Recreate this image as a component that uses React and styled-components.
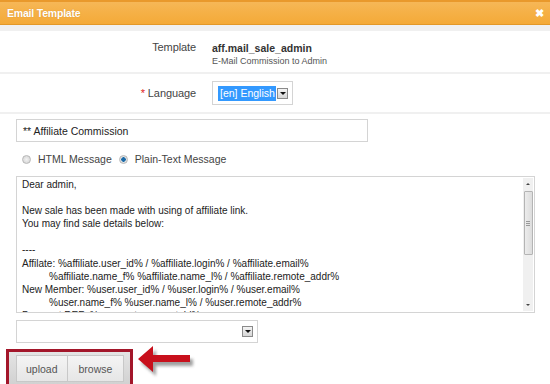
import styled, { createGlobalStyle } from 'styled-components';

const GlobalStyle = createGlobalStyle`
  html, body {
    margin: 0;
    padding: 0;
    background: #fff;
  }
  body {
    font-family: "Liberation Sans", Arial, sans-serif;
    font-size: 10px;
    color: #333;
  }
`;

const Dialog = styled.div`
  width: 550px;
  height: 384px;
  overflow: hidden;
  background: #fff;
`;

const Header = styled.div`
  height: 22px;
  display: flex;
  align-items: center;
  justify-content: space-between;
  padding: 0 6px 0 7px;
  background: linear-gradient(to bottom, #f6b757 0%, #f5b046 50%, #f4aa38 100%);
  border-top: 2px solid #e9992c;
  border-bottom: 1px solid #e39828;
`;

const Title = styled.h1`
  margin: 0;
  font-size: 10.5px;
  font-weight: bold;
  color: #fff;
  letter-spacing: -0.2px;
  text-shadow: 0 0 1px rgba(180, 110, 20, 0.5);
`;

const Close = styled.span`
  color: #fff;
  font-size: 11px;
  font-weight: bold;
  line-height: 1;
`;

const Strip = styled.div`
  height: 6px;
  background: #f0f0f0;
`;

const Row = styled.div`
  display: grid;
  grid-template-columns: 196px 1fr;
  column-gap: 16px;
  align-items: ${(p) => (p.$top ? 'start' : 'center')};
  height: ${(p) => p.$h}px;
  padding-top: ${(p) => p.$pt || 0}px;
  box-sizing: border-box;
  border-bottom: 2px solid #f0f0f0;
`;

const Label = styled.div`
  text-align: right;
  font-size: 11px;
  color: #444;
  letter-spacing: -0.1px;
`;

const Req = styled.span`
  color: #e01818;
  margin-right: 3px;
`;

const Value = styled.div`
  display: flex;
  flex-direction: column;
  gap: 2px;
  padding-top: 1px;
`;

const Strong = styled.span`
  font-weight: bold;
  font-size: 10.5px;
  color: #333;
`;

const Small = styled.span`
  font-size: 9px;
  color: #555;
`;

const SelectBox = styled.div`
  display: flex;
  align-items: center;
  gap: 1px;
  width: ${(p) => p.$w}px;
  height: ${(p) => p.$h}px;
  box-sizing: border-box;
  padding: 0 4px 0 5px;
  border: 1px solid #d4d4d4;
  background: #fff;
  justify-content: ${(p) => (p.$end ? 'flex-end' : 'flex-start')};
`;

const Picked = styled.span`
  background: #3399ff;
  color: #fff;
  font-size: 10.5px;
  padding: 0 2px;
  height: 15px;
  line-height: 15px;
  box-sizing: border-box;
  width: 59px;
  white-space: nowrap;
  overflow: hidden;
`;

const ArrowBtn = styled.span`
  width: 11px;
  height: 11px;
  flex: none;
  box-sizing: border-box;
  border: 1px solid #8a8a8a;
  background: linear-gradient(to bottom, #f4f4f4, #d6d6d6);
  display: flex;
  align-items: center;
  justify-content: center;
  &::after {
    content: '';
    border-left: 3px solid transparent;
    border-right: 3px solid transparent;
    border-top: 3px solid #111;
  }
`;

const Body = styled.div`
  padding: 5px 15px 0 16px;
  display: flex;
  flex-direction: column;
`;

const TextInput = styled.div`
  width: 352px;
  height: 23px;
  box-sizing: border-box;
  border: 1px solid #d4d4d4;
  padding: 0 6px;
  display: flex;
  align-items: center;
  font-size: 10.5px;
  color: #222;
`;

const Radios = styled.div`
  display: flex;
  align-items: center;
  height: 16px;
  margin: 9px 0 9px 0;
  padding-left: 2px;
  font-size: 10.5px;
  color: #444;
`;

const Radio = styled.span`
  width: 9px;
  height: 9px;
  border-radius: 50%;
  box-sizing: border-box;
  border: 1px solid #b8b8b8;
  background: radial-gradient(circle at 50% 50%, ${(p) => (p.$on ? '#1b6aa8 0, #1b6aa8 2px, #e6e6e6 2.5px' : '#f2f2f2 0')}, #d0d0d0 100%);
  margin: 0 7px 0 ${(p) => p.$ml || 0}px;
`;

const Area = styled.div`
  position: relative;
  width: 519px;
  height: 137px;
  box-sizing: border-box;
  border: 1px solid #d4d4d4;
  overflow: hidden;
  padding: 1px 16px 0 5px;
`;

const Line = styled.div`
  height: 13.1px;
  line-height: 13.1px;
  white-space: pre;
  font-size: 10px;
  color: #222;
  padding-left: ${(p) => (p.$indent ? 27 : 0)}px;
`;

const Scroll = styled.div`
  position: absolute;
  top: 1px;
  right: 1px;
  bottom: 1px;
  width: 10px;
  background: #f0f0f0;
  display: flex;
  flex-direction: column;
  align-items: center;
`;

const ScrollArrow = styled.span`
  height: 12px;
  display: flex;
  align-items: center;
  &::after {
    content: '';
    border-left: 2px solid transparent;
    border-right: 2px solid transparent;
    ${(p) => (p.$up ? 'border-bottom' : 'border-top')}: 2px solid #444;
  }
`;

const Thumb = styled.div`
  width: 9px;
  height: 64px;
  margin-top: 1px;
  box-sizing: border-box;
  border: 1px solid #b4b4b4;
  border-radius: 1px;
  background: linear-gradient(to right, #ececec, #dcdcdc);
  display: flex;
  align-items: center;
  justify-content: center;
  &::after {
    content: '';
    width: 4px;
    height: 5px;
    background: repeating-linear-gradient(to bottom, #999 0, #999 1px, transparent 1px, transparent 2px);
  }
`;

const Fill = styled.div`
  flex: 1;
`;

const Bottom = styled.div`
  margin-top: 7px;
`;

const ToolRow = styled.div`
  display: flex;
  align-items: flex-start;
  margin: 6px 0 0 -10px;
`;

const Frame = styled.div`
  display: flex;
  border: 3px solid #a3162a;
  padding: 3px 6px 6px 7px;
  background: linear-gradient(to bottom, #e4e4e4, #cfcfcf);
`;

const Btn = styled.span`
  height: 25px;
  padding: 0 ${(p) => p.$px}px;
  display: flex;
  align-items: center;
  font-size: 10.5px;
  color: #555;
  background: linear-gradient(to bottom, #f4f4f4, #e6e6e6);
  border: 1px solid #c8c8c8;
  & + & {
    border-left: none;
  }
`;

const lines = [
  ['Dear admin,'],
  [''],
  ['New sale has been made with using of affiliate link.'],
  ['You may find sale details below:'],
  [''],
  ['----'],
  ['Affilate: %affiliate.user_id% / %affiliate.login% / %affiliate.email%'],
  ['%affiliate.name_f% %affiliate.name_l% / %affiliate.remote_addr%', true],
  ['New Member: %user.user_id% / %user.login% / %user.email%'],
  ['%user.name_f% %user.name_l% / %user.remote_addr%', true],
  ['Payment REF: %payment.payment_id%'],
];

function Pointer() {
  return (
    <svg width="64" height="34" viewBox="0 0 64 34" style={{ marginLeft: 1, marginTop: -4 }}>
      <defs>
        <filter id="sh" x="-20%" y="-20%" width="150%" height="160%">
          <feGaussianBlur stdDeviation="1.5" />
        </filter>
      </defs>
      <g fill="#555" opacity="0.55" filter="url(#sh)" transform="translate(3 4)">
        <polygon points="4,14 19,1 19,10 56,10 56,17 19,17 19,27" />
      </g>
      <polygon points="4,14 19,1 19,10 56,10 56,17 19,17 19,27" fill="#c8101c" />
    </svg>
  );
}

export default function App() {
  return (
    <>
      <GlobalStyle />
      <Dialog>
        <Header>
          <Title>Email Template</Title>
          <Close>✖</Close>
        </Header>
        <Strip />
        <Row $h={43} $pt={10} $top>
          <Label>Template</Label>
          <Value>
            <Strong>aff.mail_sale_admin</Strong>
            <Small>E-Mail Commission to Admin</Small>
          </Value>
        </Row>
        <Row $h={40}>
          <Label>
            <Req>*</Req>Language
          </Label>
          <SelectBox $w={81} $h={24}>
            <Picked>[en] English</Picked>
            <ArrowBtn />
          </SelectBox>
        </Row>
        <Body>
          <TextInput>** Affiliate Commission</TextInput>
          <Radios>
            <Radio $ml={4} />
            HTML Message
            <Radio $on $ml={7} />
            Plain-Text Message
          </Radios>
          <Area>
            {lines.map(([t, ind], i) => (
              <Line key={i} $indent={ind}>{t}</Line>
            ))}
            <Scroll>
              <ScrollArrow $up />
              <Thumb />
              <Fill />
              <ScrollArrow />
            </Scroll>
          </Area>
          <Bottom>
            <SelectBox $w={242} $h={23} $end>
              <ArrowBtn />
            </SelectBox>
          </Bottom>
          <ToolRow>
            <Frame>
              <Btn $px={9}>upload</Btn>
              <Btn $px={11}>browse</Btn>
            </Frame>
            <Pointer />
          </ToolRow>
        </Body>
      </Dialog>
    </>
  );
}
